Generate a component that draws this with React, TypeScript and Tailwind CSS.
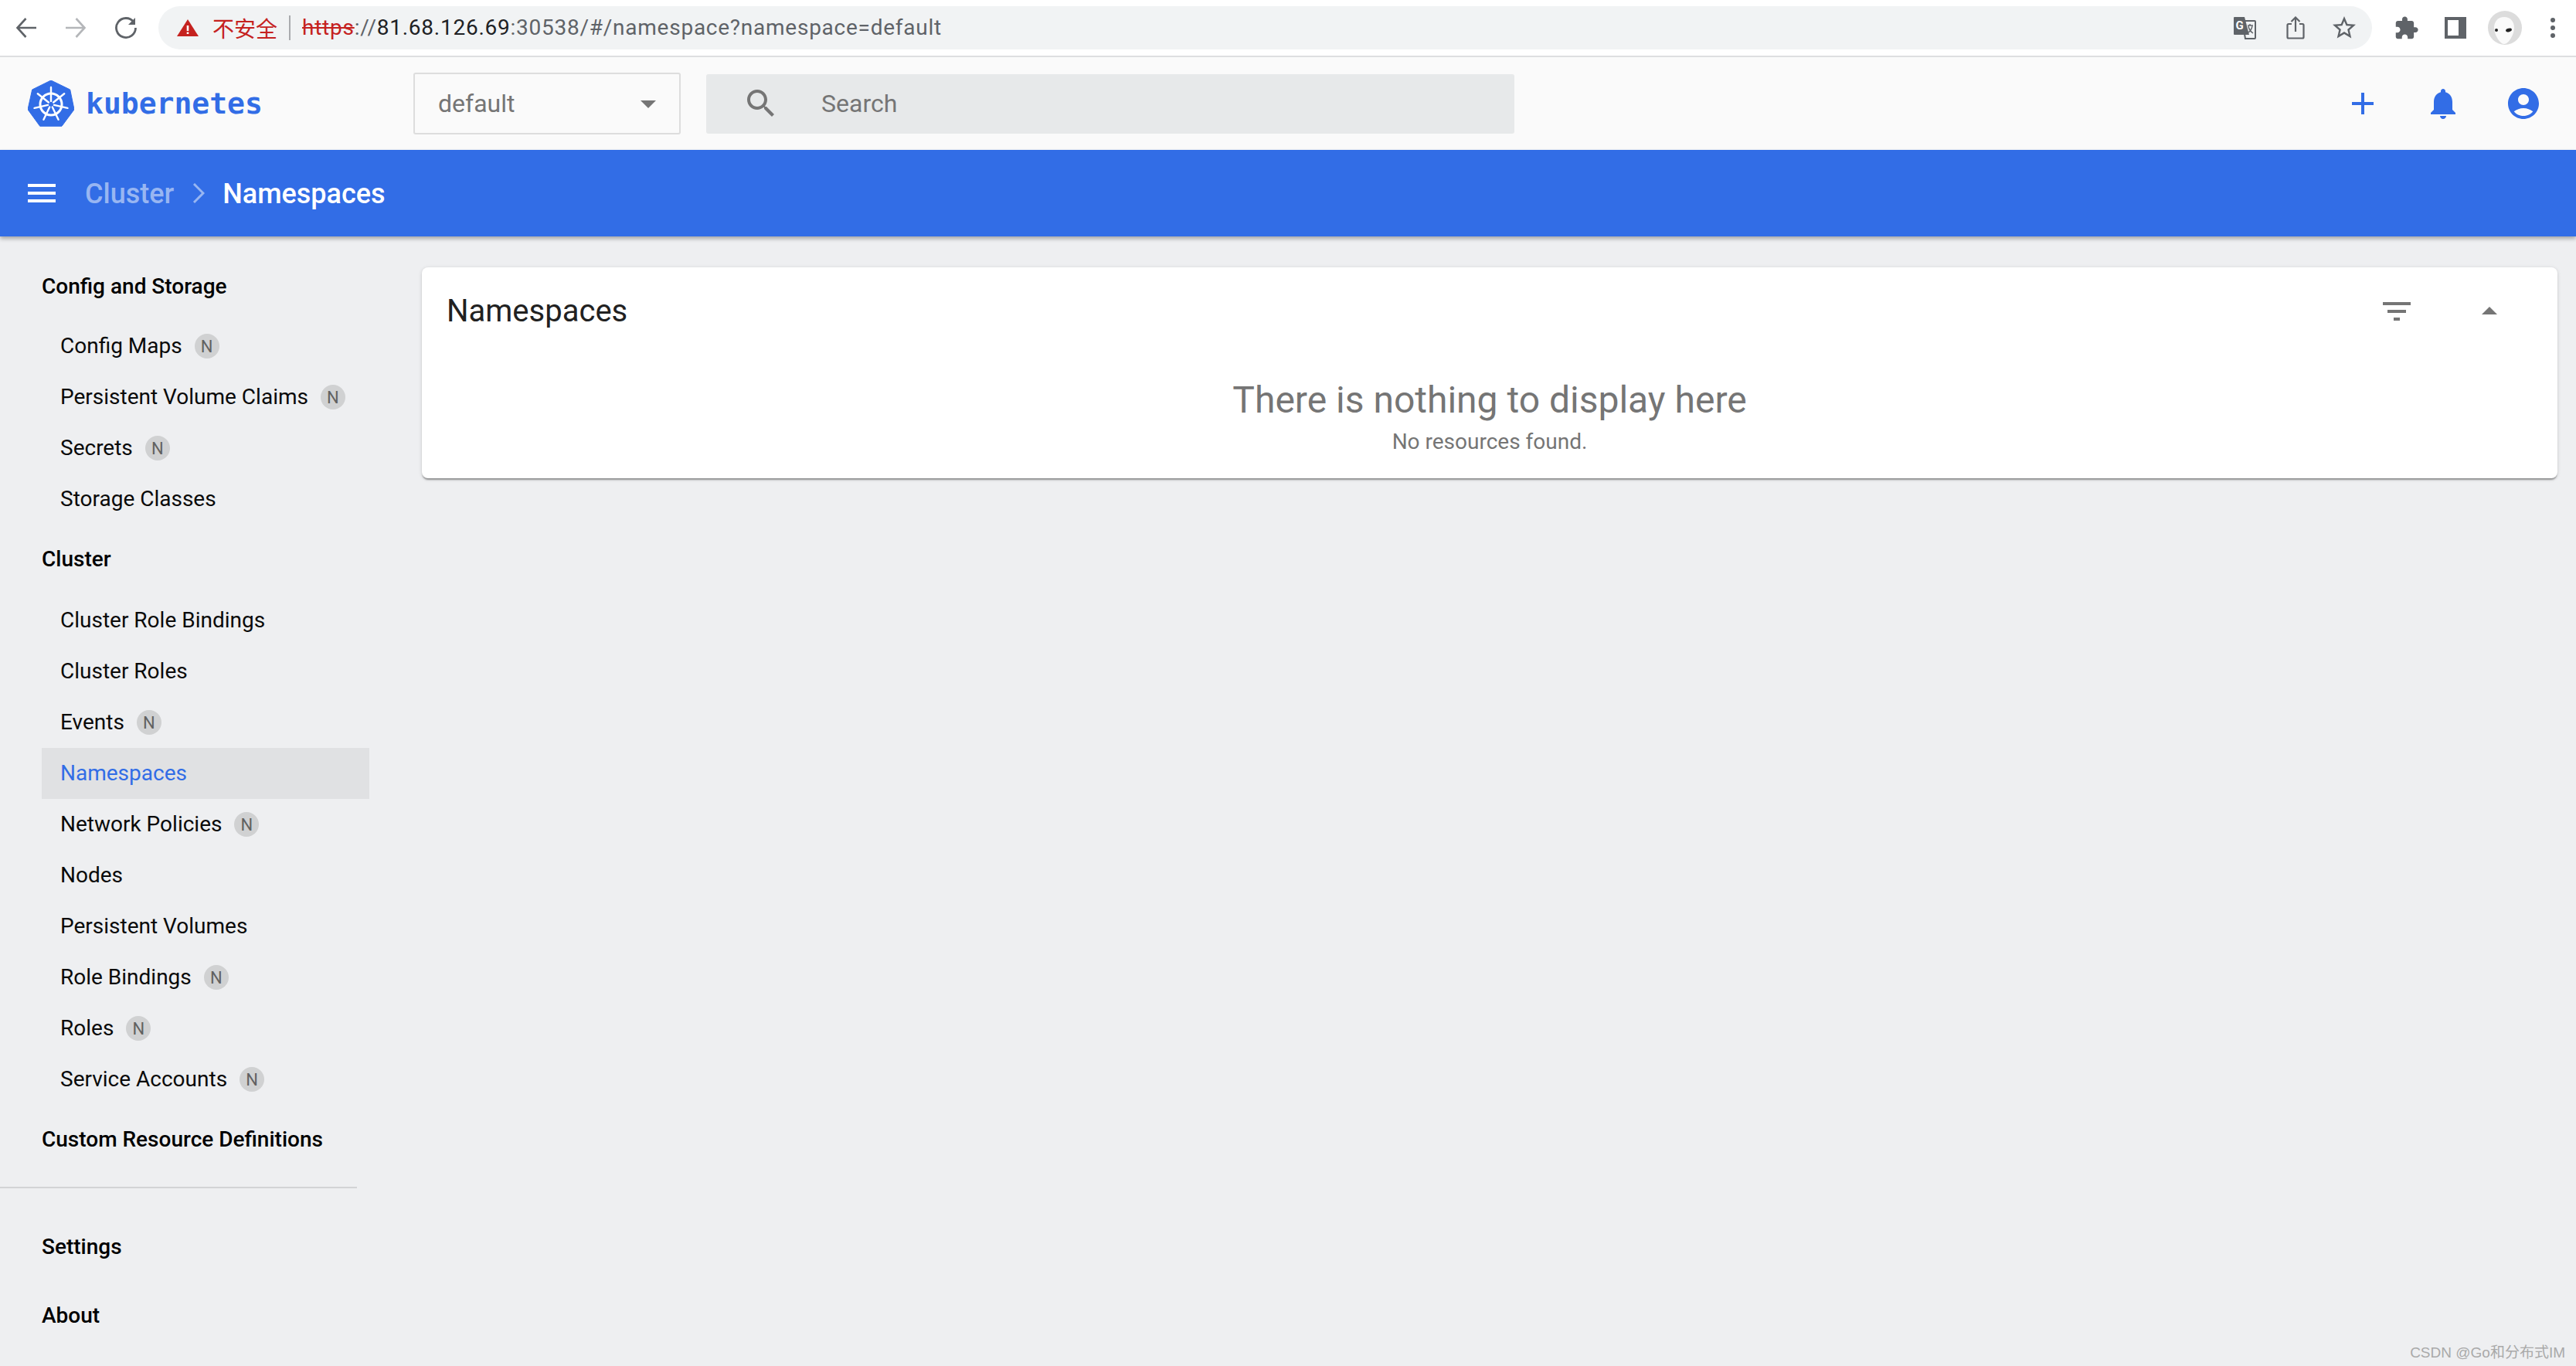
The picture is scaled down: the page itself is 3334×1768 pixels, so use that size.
const BLUE = "#326de6";

const sections = [
  {
    title: "Config and Storage",
    gap: "mb-[11px] mt-[12px]",
    items: [
      { label: "Config Maps", ns: true },
      { label: "Persistent Volume Claims", ns: true },
      { label: "Secrets", ns: true },
      { label: "Storage Classes" },
    ],
  },
  {
    title: "Cluster",
    gap: "mb-[13px] mt-[12px]",
    items: [
      { label: "Cluster Role Bindings" },
      { label: "Cluster Roles" },
      { label: "Events", ns: true },
      { label: "Namespaces", active: true },
      { label: "Network Policies", ns: true },
      { label: "Nodes" },
      { label: "Persistent Volumes" },
      { label: "Role Bindings", ns: true },
      { label: "Roles", ns: true },
      { label: "Service Accounts", ns: true },
    ],
  },
];

const Icon = ({ d, size = 48, color = "#757575" }: { d: string; size?: number; color?: string }) => (
  <svg width={size} height={size} viewBox="0 0 24 24" fill={color} className="shrink-0">
    <path d={d} />
  </svg>
);

const spokes = [0, 1, 2, 3, 4, 5, 6].map((i) => {
  const a = ((-90 + i * (360 / 7)) * Math.PI) / 180;
  return { x1: 30 + 4 * Math.cos(a), y1: 31 + 4 * Math.sin(a), x2: 30 + 22 * Math.cos(a), y2: 31 + 22 * Math.sin(a) };
});

const KubeLogo = () => (
  <svg width="60" height="60" viewBox="0 0 60 60" className="shrink-0">
    <path d="M30 0 54.7 12 60 37.7 44 59.3H15.7L0 37.7 5.7 12Z" fill={BLUE} stroke={BLUE} strokeLinejoin="round" />
    <circle cx="30" cy="31" r="14" fill="none" stroke="#fff" strokeWidth="3" />
    {spokes.map((s, i) => (
      <line key={i} x1={s.x1} y1={s.y1} x2={s.x2} y2={s.y2} stroke="#fff" strokeWidth="2.4" strokeLinecap="round" />
    ))}
    <circle cx="30" cy="31" r="2.4" fill={BLUE} />
  </svg>
);

const BrowserBar = () => (
  <div className="flex h-[74px] shrink-0 items-center border-b-2 border-[#dedfe0] bg-white">
    <div className="flex w-[205px] shrink-0 items-center pl-[20px]">
      <svg width="28" height="28" viewBox="0 0 28 28" fill="none" stroke="#5f6368" strokeWidth="2.6" className="shrink-0">
        <path d="M27 14H3M13.5 2 2.5 14l11 12" />
      </svg>
      <svg width="28" height="28" viewBox="0 0 28 28" fill="none" stroke="#b4b6b9" strokeWidth="2.6" className="ml-[36px] shrink-0">
        <path d="M1 14h24M14.5 2l11 12-11 12" />
      </svg>
      <svg width="30" height="30" viewBox="0 0 30 30" fill="none" stroke="#5f6368" strokeWidth="2.8" className="ml-[36px] shrink-0">
        <path d="M25 7.5A12.5 12.5 0 1 0 27.5 15" />
        <path d="M27 2v9h-9" fill="#5f6368" stroke="none" />
      </svg>
    </div>
    <div className="flex h-[56px] w-[2865px] shrink-0 items-center rounded-full bg-[#f1f3f4] pl-[24px] font-['Roboto',sans-serif] text-[28px] tracking-[0.75px] text-[#5f6368]">
      <svg width="28" height="22" viewBox="0 0 28 22" className="shrink-0">
        <path d="M14 0 28 22H0Z" fill="#c5221f" />
        <path d="M12.7 8h2.6v7h-2.6zM12.7 16.5h2.6V19h-2.6z" fill="#fff" />
      </svg>
      <span className="ml-[18px] font-['Noto_Sans_CJK_SC',sans-serif] tracking-normal text-[#c5221f]">不安全</span>
      <span className="ml-[15px] mr-[15px] h-[32px] w-[2px] bg-[#a9abae]" />
      <span className="text-[#c5221f] line-through">https</span>
      <span>://</span>
      <span className="text-[#202124]">81.68.126.69</span>
      <span>:30538/#/namespace?namespace=default</span>
      <div className="ml-auto mr-[18px] flex items-center">
        <svg width="30" height="30" viewBox="0 0 30 30" className="shrink-0">
          <path d="M12 6h16a1 1 0 0 1 1 1v21a1 1 0 0 1-1 1H16z" fill="#f1f3f4" stroke="#5f6368" strokeWidth="2" />
          <path d="M2 1h13l6 23H2a1 1 0 0 1-1-1V2a1 1 0 0 1 1-1Z" fill="#5f6368" />
          <text x="3.5" y="17" fill="#fff" fontSize="15" fontWeight="700" fontFamily="Roboto, sans-serif">G</text>
          <path d="M19 12h7M22 10v2M20 13c1 5 3 7 6 9M25 13c-1 4-2 6-5 8" fill="none" stroke="#5f6368" strokeWidth="1.4" />
        </svg>
        <svg width="24" height="30" viewBox="0 0 24 30" fill="none" stroke="#5f6368" strokeWidth="2.2" className="ml-[39px] shrink-0">
          <path d="M7 10H3a1.5 1.5 0 0 0-1.5 1.500V27A1.500 1.500 0 0 0 3 28.500h18a1.500 1.500 0 0 0 1.500-1.500V11.500A1.500 1.500 0 0 0 21 10h-4" />
          <path d="M12 20V2M6.500 7 12 1.500 17.500 7" />
        </svg>
        <div className="ml-[33px]">
          <Icon size={36} color="#5f6368" d="M22 9.240l-7.190-.620L12 2 9.190 8.630 2 9.240l5.460 4.730L5.820 21 12 17.270 18.180 21l-1.630-7.030L22 9.240zM12 15.400l-3.760 2.270 1-4.280-3.320-2.880 4.380-.380L12 6.100l1.710 4.040 4.380.380-3.320 2.880 1 4.280L12 15.400z" />
        </div>
      </div>
    </div>
    <div className="ml-[28px] shrink-0">
      <Icon size={33} color="#5f6368" d="M20.500 11H19V7c0-1.100-.9-2-2-2h-4V3.500C13 2.120 11.880 1 10.500 1S8 2.120 8 3.500V5H4c-1.100 0-1.990.9-1.990 2v3.800H3.500c1.490 0 2.700 1.210 2.700 2.700s-1.210 2.700-2.700 2.700H2V20c0 1.100.9 2 2 2h3.800v-1.500c0-1.490 1.210-2.700 2.700-2.700 1.490 0 2.700 1.210 2.700 2.700V22H17c1.100 0 2-.9 2-2v-4h1.500c1.380 0 2.500-1.120 2.500-2.500S21.880 11 20.500 11z" />
    </div>
    <svg width="28" height="28" viewBox="0 0 28 28" className="ml-[33px] shrink-0">
      <path d="M0 0h28v28H0z" fill="#5f6368" />
      <path d="M4 4h14v20H4z" fill="#fff" />
    </svg>
    <svg width="44" height="44" viewBox="0 0 44 44" className="ml-[28px] shrink-0">
      <circle cx="22" cy="22" r="22" fill="#dcdcdc" />
      <path d="M21 8c8 0 13 6 13 14 0 8-7 21-13 21S8 30 8 22C8 14 13 8 21 8Z" fill="#fafafa" />
      <ellipse cx="11" cy="25" rx="2" ry="2" fill="#222" />
      <ellipse cx="27" cy="25" rx="4" ry="2.200" fill="#222" transform="rotate(-15 27 25)" />
    </svg>
    <div className="ml-[37px] flex shrink-0 flex-col gap-[4px]">
      <span className="h-[6px] w-[6px] rounded-full bg-[#5f6368]" />
      <span className="h-[6px] w-[6px] rounded-full bg-[#5f6368]" />
      <span className="h-[6px] w-[6px] rounded-full bg-[#5f6368]" />
    </div>
  </div>
);

const Toolbar = () => (
  <div className="flex h-[120px] shrink-0 items-center bg-[#fafafa] font-['Roboto',sans-serif]">
    <div className="flex w-[535px] shrink-0 items-center pl-[36px]">
      <KubeLogo />
      <span className="ml-[15px] font-['DejaVu_Sans_Mono',monospace] text-[38px] font-bold leading-none text-[#326de6]">
        kubernetes
      </span>
    </div>
    <div className="flex h-[80px] w-[346px] shrink-0 items-center justify-between rounded-[3px] border-2 border-[#dddddd] pl-[30px] pr-[16px] text-[32px] text-[#757575]">
      default
      <Icon d="M7 10l5 5 5-5z" />
    </div>
    <div className="ml-[33px] flex h-[77px] w-[1046px] shrink-0 items-center rounded-[3px] bg-[#e7e9ea] pl-[47px] text-[32px] text-[#757575]">
      <Icon d="M15.500 14h-.79l-.28-.27C15.410 12.590 16 11.110 16 9.500 16 5.910 13.090 3 9.500 3S3 5.910 3 9.500 5.910 16 9.500 16c1.610 0 3.090-.59 4.230-1.570l.27.28v.79l5 4.990L20.490 19l-4.990-5zm-6 0C7.010 14 5 11.990 5 9.500S7.010 5 9.500 5 14 7.010 14 9.500 11.990 14 9.500 14z" />
      <span className="ml-[54px]">Search</span>
    </div>
    <div className="ml-auto flex items-center gap-[56px] pr-[44px]">
      <Icon color={BLUE} d="M19 13h-6v6h-2v-6H5v-2h6V5h2v6h6v2z" />
      <Icon color={BLUE} d="M12 22c1.100 0 2-.9 2-2h-4c0 1.100.89 2 2 2zm6-6v-5c0-3.070-1.640-5.640-4.500-6.320V4c0-.83-.67-1.500-1.500-1.500s-1.500.67-1.500 1.500v.68C7.630 5.360 6 7.920 6 11v5l-2 2v1h16v-1l-2-2z" />
      <Icon color={BLUE} d="M12 2C6.480 2 2 6.480 2 12s4.480 10 10 10 10-4.480 10-10S17.520 2 12 2zm0 4c1.930 0 3.500 1.570 3.500 3.500S13.930 13 12 13s-3.500-1.570-3.500-3.500S10.070 6 12 6zm0 14c-2.030 0-4.430-.82-6.140-2.880C7.550 15.800 9.680 15 12 15s4.450.8 6.140 2.120C16.430 19.180 14.030 20 12 20z" />
    </div>
  </div>
);

const Breadcrumb = () => (
  <div className="relative z-10 flex h-[112px] shrink-0 items-center bg-[#326de6] pl-[30px] font-['Roboto',sans-serif] text-[36px] font-medium shadow-[0_3px_5px_rgba(0,0,0,0.3)]">
    <Icon color="#fff" d="M3 18h18v-2H3v2zm0-5h18v-2H3v2zm0-7v2h18V6H3z" />
    <span className="ml-[32px] pt-[2px] text-[#98b6f2]">Cluster</span>
    <svg width="16" height="26" viewBox="0 0 16 26" fill="none" stroke="#98b6f2" strokeWidth="3" className="ml-[24px] shrink-0">
      <path d="M2 1l12 12L2 25" />
    </svg>
    <span className="ml-[23px] pt-[2px] text-white">Namespaces</span>
  </div>
);

const Heading = ({ children, className = "" }: { children: string; className?: string }) => (
  <div className={`flex h-[66px] items-center pl-[54px] font-medium text-black ${className}`}>{children}</div>
);

const Sidebar = () => (
  <aside className="w-[546px] shrink-0 pt-[20px] text-[28px] text-[#0a0a0a]">
    {sections.map((section) => (
      <div key={section.title}>
        <Heading className={section.gap}>{section.title}</Heading>
        {section.items.map((item) => (
          <div
            key={item.label}
            className={
              item.active
                ? "ml-[54px] flex h-[66px] w-[424px] items-center bg-[#e0e1e3] pl-[24px] text-[#326de6]"
                : "ml-[54px] flex h-[66px] w-[424px] items-center pl-[24px]"
            }
          >
            {item.label}
            {item.ns && (
              <span className="ml-[16px] flex h-[32px] w-[32px] items-center justify-center rounded-full bg-[#d0d1d2] text-[22px] text-[#616161]">
                N
              </span>
            )}
          </div>
        ))}
      </div>
    ))}
    <Heading className="mt-[12px]">Custom Resource Definitions</Heading>
    <div className="mt-[28px] h-[2px] w-[462px] bg-[#d2d3d5]" />
    <Heading className="mt-[43px]">Settings</Heading>
    <Heading className="mt-[23px]">About</Heading>
  </aside>
);

export default function App() {
  return (
    <div className="relative flex h-screen flex-col overflow-hidden bg-[#eeeff1] font-['Roboto',sans-serif]">
      <BrowserBar />
      <Toolbar />
      <Breadcrumb />
      <div className="flex min-h-0 flex-1">
        <Sidebar />
        <main className="flex-1 pr-[24px] pt-[40px]">
          <div className="h-[273px] rounded-[8px] bg-white shadow-[0_3px_2px_-1px_rgba(0,0,0,0.35),0_1px_5px_rgba(0,0,0,0.15)]">
            <div className="flex h-[114px] items-center justify-between pl-[32px] pr-[64px]">
              <h1 className="text-[40px] text-[#212121]">Namespaces</h1>
              <div className="flex items-center gap-[72px]">
                <Icon d="M10 18h4v-2h-4v2zM3 6v2h18V6H3zm3 7h12v-2H6v2z" />
                <Icon d="M7 14l5-5 5 5z" />
              </div>
            </div>
            <div className="flex flex-col items-center pt-[30px] text-[#757575]">
              <div className="text-[48px] leading-[56px]">There is nothing to display here</div>
              <div className="mt-[8px] text-[28px] leading-[36px]">No resources found.</div>
            </div>
          </div>
        </main>
      </div>
      <div className="absolute bottom-[3px] right-[14px] font-['Liberation_Sans','Noto_Sans_CJK_SC',sans-serif] text-[19px] text-[#a9a9a9]">
        CSDN @Go和分布式IM
      </div>
    </div>
  );
}
